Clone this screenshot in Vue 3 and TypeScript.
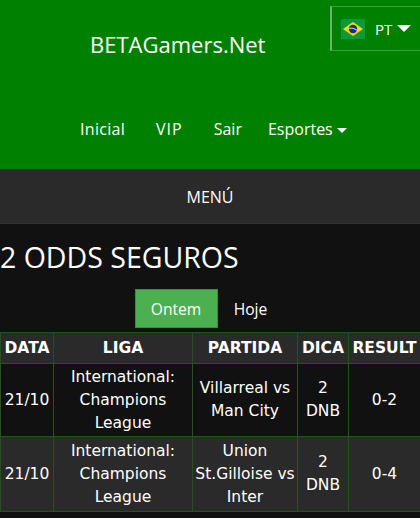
<template>
  <div class="page">
    <header class="top">
      <div class="lang">
        <svg class="flag" width="24" height="20" viewBox="0 0 24 20">
          <rect width="24" height="20" fill="#0a9a3c" />
          <polygon points="12,3 22,10 12,17 2,10" fill="#f5d90a" />
          <circle cx="12" cy="10" r="4.2" fill="#1a2f7a" />
          <path d="M8 9.2 Q12 8.4 16 11" stroke="#fff" stroke-width="0.8" fill="none" />
        </svg>
        <span>PT</span>
        <i class="caret big"></i>
      </div>
      <div class="brand">BETAGamers.Net</div>
      <nav class="nav">
        <a v-for="link in links" :key="link">{{ link }}</a>
        <a class="sports">Esportes <i class="caret"></i></a>
      </nav>
    </header>
    <div class="menu">MENÚ</div>
    <main>
      <h1>2 ODDS SEGUROS</h1>
      <div class="tabs">
        <button class="tab active">Ontem</button>
        <button class="tab">Hoje</button>
      </div>
      <table>
        <colgroup>
          <col v-for="w in widths" :key="w" :style="{ width: w + 'px' }" />
        </colgroup>
        <thead>
          <tr>
            <th v-for="h in heads" :key="h">{{ h }}</th>
          </tr>
        </thead>
        <tbody>
          <tr v-for="row in rows" :key="row.match">
            <td>{{ row.date }}</td>
            <td>{{ row.league }}</td>
            <td>{{ row.match }}</td>
            <td>{{ row.tip }}</td>
            <td>{{ row.result }}</td>
          </tr>
        </tbody>
      </table>
    </main>
  </div>
</template>

<script setup lang="ts">
type Row = {
  date: string
  league: string
  match: string
  tip: string
  result: string
}

const links = ['Inicial', 'VIP', 'Sair']
const heads = ['DATA', 'LIGA', 'PARTIDA', 'DICA', 'RESULT']
const widths = [53, 139, 105, 51, 72]

const rows: Row[] = [
  {
    date: '21/10',
    league: 'International: Champions League',
    match: 'Villarreal vs Man City',
    tip: '2 DNB',
    result: '0-2'
  },
  {
    date: '21/10',
    league: 'International: Champions League',
    match: 'Union St.Gilloise vs Inter',
    tip: '2 DNB',
    result: '0-4'
  }
]
</script>

<style>
body {
  background: #111;
}
</style>

<style scoped>
.page {
  width: 420px;
  height: 518px;
  overflow: hidden;
  background: #111;
  color: #fff;
  font-family: 'Open Sans', 'Noto Sans', sans-serif;
}

.top {
  position: relative;
  height: 169px;
  background: #008000;
  box-sizing: border-box;
  padding-top: 27px;
}

.lang {
  position: absolute;
  top: 6px;
  right: 0;
  width: 90px;
  height: 45px;
  box-sizing: border-box;
  border: 1px solid #3f9c3f;
  border-left: 2px solid #6fb36f;
  border-right: none;
  display: flex;
  align-items: center;
  padding-left: 9px;
  font-size: 15px;
}

.flag {
  margin-right: 10px;
}

.brand {
  margin-left: 90px;
  font-size: 22px;
  line-height: 34px;
}

.nav {
  display: flex;
  margin-top: 57px;
  padding-left: 80px;
  gap: 31px;
  font-size: 16px;
  line-height: 22px;
}

.nav a:first-child {
  letter-spacing: 0.3px;
}

.nav a:nth-child(2) {
  letter-spacing: 1px;
}

.nav .sports {
  margin-left: -5px;
}

.caret {
  display: inline-block;
  width: 0;
  height: 0;
  border-left: 5px solid transparent;
  border-right: 5px solid transparent;
  border-top: 5px solid #fff;
  vertical-align: 2px;
}

.caret.big {
  margin-left: 5px;
  border-left-width: 7px;
  border-right-width: 7px;
  border-top-width: 7px;
}

.menu {
  height: 55px;
  line-height: 57px;
  background: #2a2a2a;
  border-bottom: 1px solid #333;
  box-sizing: border-box;
  text-align: center;
  font-size: 16px;
}

h1 {
  margin: 15px 0 0;
  font-size: 28.5px;
  font-weight: 400;
  line-height: 36px;
}

.tabs {
  display: flex;
  justify-content: center;
  margin-top: 14px;
  padding-right: 2px;
}

.tab {
  width: 83px;
  height: 39px;
  padding: 0;
  font: inherit;
  font-size: 15.6px;
  color: #fff;
  background: none;
  border: 1px solid transparent;
}

.tab.active {
  background: #4caf50;
  border-color: #3c8c40;
}

.tab:not(.active) {
  width: 66px;
}

table {
  width: 420px;
  margin-top: 4px;
  table-layout: fixed;
  border-collapse: collapse;
  font-family: 'DejaVu Sans', sans-serif;
  font-size: 15.5px;
  text-align: center;
}

th,
td {
  border: 1px solid #25501f;
  padding: 0 2px;
}

th {
  height: 30px;
  padding: 0;
  background: #2a2a2a;
  font-size: 15.5px;
  font-weight: 700;
}

td {
  line-height: 23px;
}

tbody tr:nth-child(2) {
  background: #2a2a2a;
}

tbody tr:nth-child(2) td {
  height: 74px;
}

tbody tr:first-child td {
  height: 72px;
}
</style>
